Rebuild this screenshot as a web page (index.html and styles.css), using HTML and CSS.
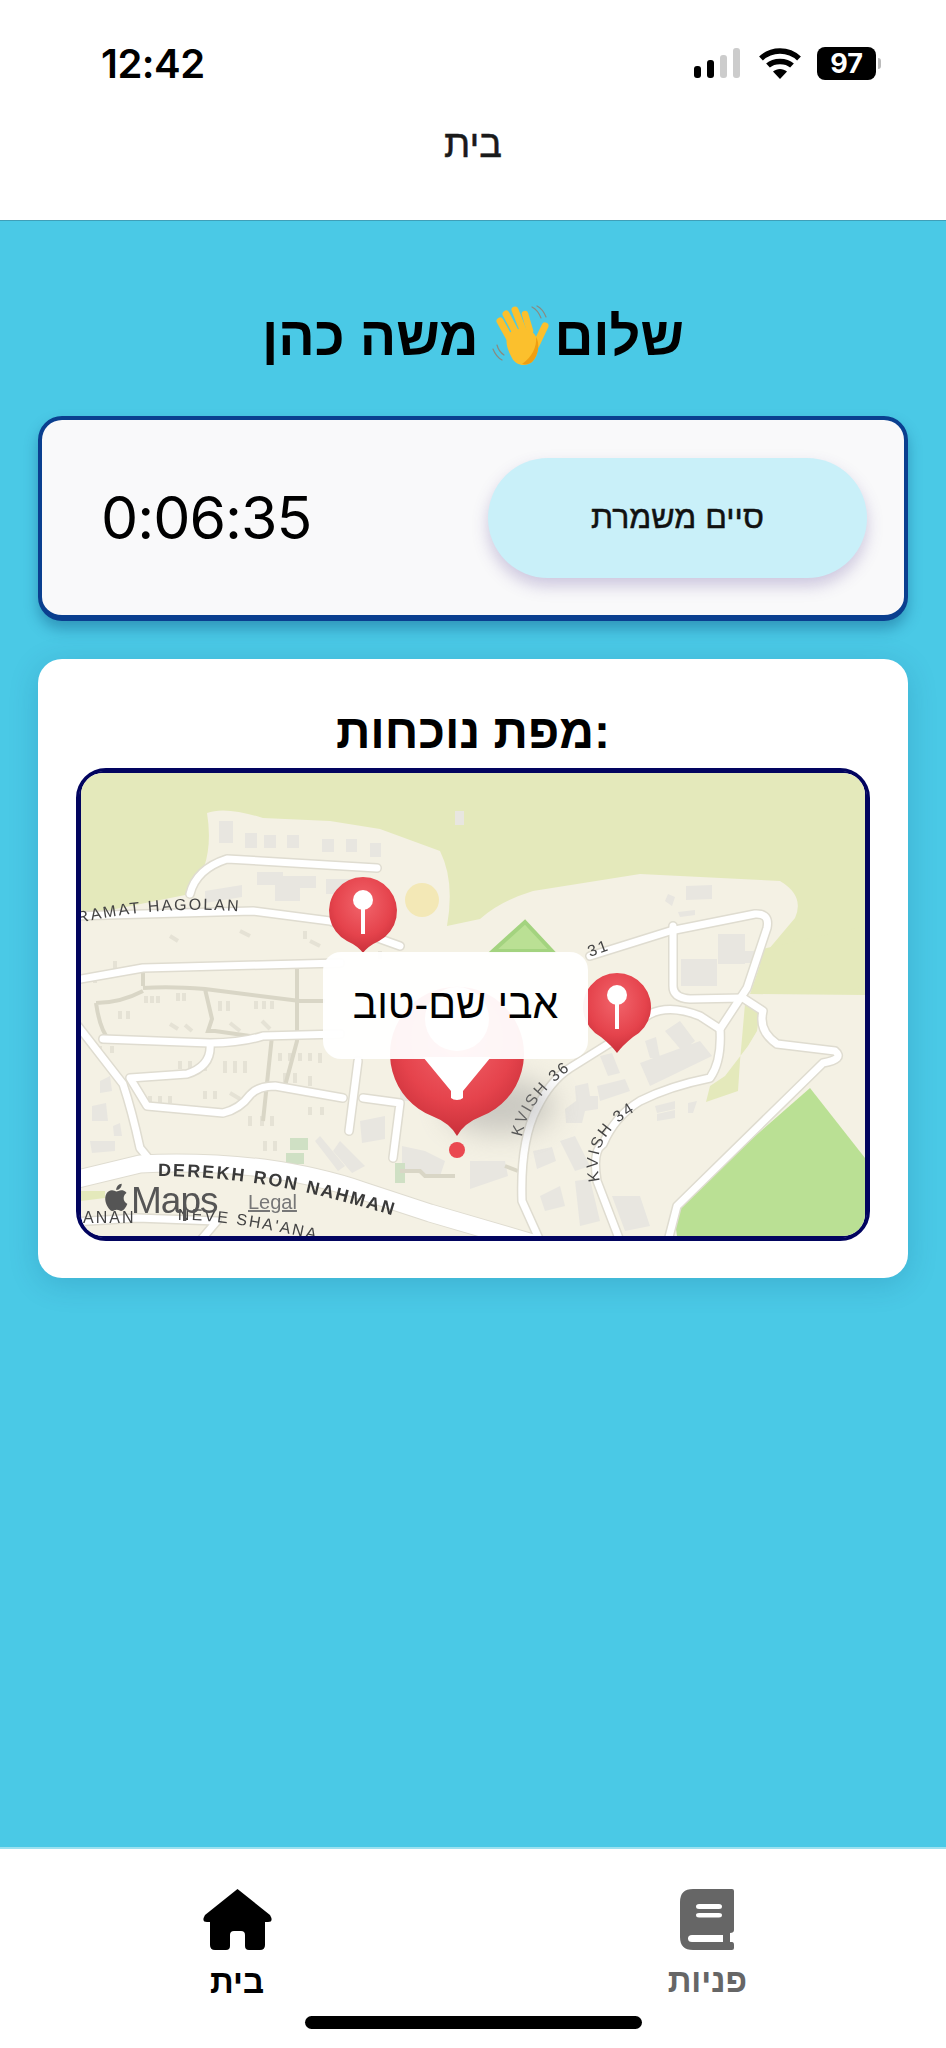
FILE: index.html
```html
<!DOCTYPE html>
<html lang="he">
<head>
  <meta charset="UTF-8">
  <meta name="viewport" content="width=device-width, initial-scale=1.0">
  <title>בית</title>
  <link rel="stylesheet" href="styles.css">
</head>
<body>
  <div class="app">

    <!-- Status bar and page title -->
    <header class="top">
      <div class="status">
        <span class="clock">12:42</span>
        <div class="status-icons">
          <div class="signal">
            <i class="bar b1"></i><i class="bar b2"></i><i class="bar b3 off"></i><i class="bar b4 off"></i>
          </div>
          <svg class="wifi" width="42" height="32" viewBox="0 0 42 32">
            <path d="M2 11.5C12.5 1.5 29.5 1.5 40 11.5" fill="none" stroke="#000" stroke-width="5.5"/>
            <path d="M9 18.5C15 13 27 13 33 18.5" fill="none" stroke="#000" stroke-width="5.5"/>
            <path d="M14 24.5C18 21 24 21 28 24.5L21 32Z" fill="#000"/>
          </svg>
          <div class="battery"><span>97</span></div>
          <i class="battery-cap"></i>
        </div>
      </div>
      <h2 class="page-title">בית</h2>
    </header>

    <main class="content">
      <h1 class="greeting">
        <span>שלום</span>
        <svg class="wave" width="62" height="62" viewBox="0 0 62 62">
          <g fill="none" stroke="#8a8a80" stroke-width="1.2" stroke-linecap="round">
            <path d="M40 2C44 4 47 8 49 13"/>
            <path d="M45 1C49 3 52 7 54 12"/>
            <path d="M1 44C3 49 6 53 10 55"/>
            <path d="M5 40C6 44 9 48 12 50"/>
          </g>
          <g fill="none" stroke="#fbc02d" stroke-linecap="round">
            <path d="M18 34L8 16" stroke-width="7"/>
            <path d="M24 28L14 9" stroke-width="7"/>
            <path d="M31 25L23 5" stroke-width="7"/>
            <path d="M38 26L33 9" stroke-width="6.5"/>
            <path d="M44 40L53 21" stroke-width="7"/>
          </g>
          <path d="M16 30C20 22 38 22 43 30C48 38 47 50 40 57C34 62 24 61 20 53C17 47 12 38 16 30Z" fill="#fbc02d"/>
          <path d="M40 57C47 50 48 38 44 32C45 42 40 52 30 59C34 60 37 59 40 57Z" fill="#ef9f13"/>
        </svg>
        <span>משה כהן</span>
      </h1>

      <section class="shift-card">
        <span class="timer">0:06:35</span>
        <button class="end-shift" type="button">סיים משמרת</button>
      </section>

      <section class="map-card">
        <h2 class="map-title">מפת נוכחות:</h2>
        <div class="map-frame">
          <div class="map-view">
            <svg class="map" width="784" height="463" viewBox="81 772 784 463">
              <defs>
                <radialGradient id="pinRed" cx="50%" cy="35%" r="65%">
                  <stop offset="0" stop-color="#f2656c"/>
                  <stop offset="0.65" stop-color="#e5434c"/>
                  <stop offset="1" stop-color="#c9303a"/>
                </radialGradient>
                <g id="thin">
                  <path d="M190 893Q196 868 227 858L377 867"/>
                  <path d="M70 915L253 910L330 920L400 945"/>
                  <path d="M70 980L143 967L340 962"/>
                  <path d="M103 1038L210 1042Q240 1042 263 1035L340 1033"/>
                  <path d="M210 1043Q212 1065 187 1073L130 1077L147 1105L223 1112Q240 1108 250 1094Q258 1085 275 1085L343 1097"/>
                  <path d="M358 1060L349 1130"/>
                  <path d="M363 1097L400 1102L393 1157"/>
                  <path d="M78 1025L123 1083Q132 1110 140 1147L153 1163"/>
                  <path d="M75 1221L137 1217L217 1220L200 1240"/>
                  <path d="M540 1240L522 1200Q520 1140 537 1107Q550 1080 570 1067L610 1042Q630 1025 650 1013Q670 1003 700 1015L720 1028"/>
                  <path d="M620 1240L597 1180Q592 1150 603 1143Q615 1115 640 1100Q670 1085 710 1077Q722 1060 720 1028L747 987L767 927Q770 912 755 913L670 930L590 955"/>
                  <path d="M673 925V985Q673 997 690 998L743 997L763 1010Q758 1030 777 1043L835 1050Q845 1058 823 1062L677 1205L668 1240"/>
                </g>
                <g id="wide">
                  <path d="M70 1180L140 1163Q200 1160 263 1167Q320 1175 363 1190L430 1212L560 1250"/>
                </g>
                <g id="lanes">
                  <path d="M143 967V985M143 987Q170 985 205 988L300 1000L325 1000M205 988L212 1018L208 1030L215 1030L250 1035M96 1002Q120 1002 143 990M96 1002Q100 1030 110 1040"/>
                  <path d="M297 967V1040L285 1085M272 1035L263 1120"/>
                  <path d="M400 1170L420 1170L425 1175L455 1175M505 1165L518 1170"/>
                </g>
              </defs>

              <rect x="81" y="772" width="784" height="463" fill="#e4e9bb"/>
              <!-- land -->
              <path class="land" d="M207 812Q225 805 263 817L330 820L380 828L440 850Q455 880 447 925L480 918Q500 900 533 890L640 873L780 880Q805 895 795 917L763 955L750 993L865 994V1235H81V915L190 893Q215 860 207 812Z"/>
              <path class="scrub" d="M753 950L865 925V985L840 992L800 985L760 965Z"/>
              <path class="scrub" d="M745 1003L760 1010L757 1030L748 1045L725 1075L710 1085L706 1101L738 1090L740 1060Z"/>
              <path class="park" d="M810 1087L865 1157V1235H677L673 1207Z"/>
              <path class="park park-edge" d="M493 950L525 921L552 950Z"/>
              <path class="scrub" d="M81 1190H105V1197L81 1200Z"/>
              <circle cx="422" cy="899" r="17" fill="#f3e8b6"/>

              <!-- buildings -->
              <g class="bld">
                <rect x="219" y="820" width="14" height="22"/><rect x="245" y="832" width="12" height="15"/><rect x="264" y="834" width="12" height="13"/><rect x="287" y="834" width="12" height="13"/><rect x="322" y="838" width="12" height="13"/><rect x="346" y="838" width="11" height="13"/><rect x="370" y="842" width="11" height="14"/><rect x="455" y="810" width="9" height="14"/>
                <rect x="257" y="871" width="26" height="13"/><path d="M275 875H316V887H300V900H275Z"/><path d="M205 890L242 884V896L205 902Z"/><rect x="326" y="878" width="24" height="15"/>
                <path d="M686 885L712 884V898L686 899ZM668 893L675 896L672 905L665 900ZM678 911L695 909V914L680 916Z"/>
                <rect x="718" y="933" width="27" height="30"/><rect x="681" y="958" width="36" height="27"/><rect x="725" y="950" width="30" height="12"/>
                <path d="M665 1030L680 1020L695 1040L682 1050ZM645 1040L656 1036L660 1057L650 1057ZM600 1055L612 1052L620 1072L608 1075ZM640 1062L700 1040L712 1055L650 1085ZM597 1085L625 1078L630 1090L600 1100ZM575 1085L588 1082L590 1095L598 1095V1108L585 1110L582 1122L566 1122L565 1108L576 1100Z"/>
                <path d="M655 1105L675 1100V1108L657 1112ZM657 1113L675 1109V1117L657 1120ZM688 1102L697 1100L693 1112L688 1112Z"/>
                <path d="M533 1150L552 1146L556 1160L537 1168ZM560 1140L575 1135L590 1165L575 1170ZM470 1160H505L508 1175L470 1188ZM540 1195L560 1185L565 1205L545 1210ZM575 1180L590 1178L600 1220L580 1225ZM612 1195L640 1195L650 1225L625 1230Z"/>
                <path d="M100 1080L110 1075L112 1090L100 1092ZM92 1105L106 1102L108 1120L92 1120ZM113 1125L120 1122L122 1135L114 1135ZM90 1140L115 1140V1150L92 1152Z"/>
                <path d="M360 1120L385 1115V1138L362 1142ZM400 1075L420 1072L425 1100L400 1100ZM402 1145L425 1150L445 1160L440 1175L402 1170Z"/>
                <path d="M320 1135L345 1165L338 1170L315 1140ZM340 1140L365 1165L352 1172L333 1150Z"/>
              </g>
              <g class="teal">
                <rect x="290" y="1137" width="18" height="12"/><rect x="286" y="1152" width="18" height="11"/><rect x="395" y="1162" width="10" height="20"/>
              </g>
              <!-- tiny house dots in the west neighbourhood -->
              <g class="dots">
                <path d="M146 995V1002M152 995V1002M158 995V1002M178 992V1000M184 992V1000M220 1000V1010M228 1000V1010M256 1000V1008M264 1000V1008M272 1000V1008M120 1010V1018M128 1010V1018M170 1023L178 1028M185 1024L192 1030M230 1022L240 1030M262 1020L270 1028M180 1060V1068M190 1060V1068M205 1060V1070M225 1060V1072M235 1060V1072M245 1060V1072M280 1052V1060M290 1052V1060M300 1052V1060M310 1052V1060M320 1052V1062M285 1072V1082M295 1072V1082M310 1075V1085M205 1090V1098M215 1090V1098M230 1092L240 1098M150 1095V1102M160 1095V1102M170 1095V1102M250 1115V1125M262 1115V1125M272 1115V1125M310 1106V1114M322 1106V1114M265 1140V1150M275 1140V1150M100 1045V1052M112 1045V1052M115 960V975M95 975V982M380 950V958M305 930V938M310 940L320 945M240 930L250 935M170 935L178 940"/>
              </g>

              <use href="#lanes" class="lane"/>
              <use href="#thin" class="road-case"/>
              <use href="#wide" class="road-case wide"/>
              <use href="#thin" class="road"/>
              <use href="#wide" class="road wide"/>

              <!-- labels -->
              <path id="lblRamat" d="M78 922Q170 902 256 912" fill="none"/>
              <path id="lblDerekh" d="M158 1175Q225 1175 300 1190Q370 1206 422 1224" fill="none"/>
              <path id="lblNeve" d="M178 1219Q230 1218 330 1242" fill="none"/>
              <path id="lbl36" d="M522 1136Q528 1098 575 1065" fill="none"/>
              <path id="lbl34" d="M600 1180Q588 1135 642 1106" fill="none"/>
              <path id="lbl31" d="M590 956L620 945" fill="none"/>
              <text class="lbl"><textPath href="#lblRamat">RAMAT HAGOLAN</textPath></text>
              <text class="lbl lbl-bold"><textPath href="#lblDerekh">DEREKH RON NAHMAN</textPath></text>
              <text class="lbl"><textPath href="#lblNeve">NEVE SHA'ANA</textPath></text>
              <text class="lbl" x="83" y="1222">ANAN</text>
              <text class="lbl"><textPath href="#lbl36">KVISH 36</textPath></text>
              <text class="lbl"><textPath href="#lbl34">KVISH 34</textPath></text>
              <text class="lbl"><textPath href="#lbl31">31</textPath></text>

              <!-- Maps logo -->
              <path class="maps-mark" transform="translate(100 1180) scale(1.36)" d="M18.71 19.5c-.83 1.24-1.71 2.45-3.05 2.47-1.34.03-1.77-.79-3.29-.79-1.53 0-2 .77-3.27.82-1.31.05-2.3-1.32-3.14-2.53C4.25 17 2.94 12.45 4.7 9.39c.87-1.52 2.43-2.48 4.12-2.51 1.28-.02 2.5.87 3.29.87.78 0 2.26-1.07 3.81-.91.65.03 2.47.26 3.64 1.98-.09.06-2.17 1.28-2.15 3.81.03 3.02 2.65 4.03 2.68 4.04-.03.07-.42 1.44-1.38 2.83M13 3.5c.73-.83 1.94-1.46 2.94-1.5.13 1.17-.34 2.35-1.04 3.19-.69.85-1.83 1.51-2.95 1.42-.15-1.15.41-2.35 1.05-3.11z"/>
              <text class="maps-word" x="131" y="1212">Maps</text>
              <text class="maps-legal" x="248" y="1208">Legal</text>

              <!-- pins -->
              <ellipse class="pin-shadow" cx="500" cy="1105" rx="55" ry="28"/>
              <g class="pin">
                <path d="M363 952Q358 945 347 940A34 34 0 1 1 379 940Q368 945 363 952Z" fill="url(#pinRed)"/>
                <circle cx="363" cy="899" r="10" fill="#fff"/>
                <rect x="361" y="905" width="4" height="28" fill="#fff"/>
              </g>
              <g class="pin">
                <path d="M617 1052Q612 1045 601 1036A34 34 0 1 1 633 1036Q622 1045 617 1052Z" fill="url(#pinRed)"/>
                <circle cx="617" cy="994" r="10" fill="#fff"/>
                <rect x="615" y="1000" width="4" height="28" fill="#fff"/>
              </g>
              <g class="pin">
                <path d="M457 1135Q450 1122 432 1115A67 67 0 1 1 482 1115Q464 1122 457 1135Z" fill="url(#pinRed)"/>
                <circle cx="457" cy="1018" r="32" fill="#fff"/>
                <path d="M423 1056L451 1090V1097Q453 1099 457 1099Q461 1099 463 1097V1090L491 1056Z" fill="#fff"/>
                <circle cx="457" cy="1149" r="8" fill="#ea4850"/>
              </g>
            </svg>
            <div class="callout">אבי שם-טוב</div>
          </div>
        </div>
      </section>
    </main>

    <!-- Bottom tabs -->
    <nav class="tabs">
      <div class="tab">
        <svg width="70" height="62" viewBox="-1 0 70 62">
          <path d="M34.5 0L67 26Q71 33 65 33H62V56Q62 61 57 61H46Q42 61 42 57V46Q42 42 38 42H31Q27 42 27 46V57Q27 61 23 61H12Q7 61 7 56V33H4Q-2 33 2 26Z" fill="#000"/>
        </svg>
        <span>בית</span>
      </div>
      <div class="tab tab-off">
        <svg width="54" height="61" viewBox="0 0 54 61">
          <path fill-rule="evenodd" d="M13 0H52Q54 0 54 2V41Q54 44 50 44V53H52Q54 53 54 56V59Q54 61 52 61H13Q0 61 0 48V13Q0 0 13 0ZM19 15Q16 15 16 17.500Q16 20 19 20H39Q42 20 42 17.500Q42 15 39 15ZM19 24Q16 24 16 26Q16 28.500 19 28.500H39Q42 28.500 42 26Q42 24 39 24ZM12 46Q8 46 8 49.500Q8 53 12 53H43V46Z" fill="#666"/>
        </svg>
        <span>פניות</span>
      </div>
      <i class="home-bar"></i>
    </nav>
  </div>
</body>
</html>
```

FILE: styles.css
```css
* {
  box-sizing: border-box;
}
body {
  margin: 0;
  font-family: "Liberation Sans", Arial, sans-serif;
  background-color: #4ac9e6;
  color: #000;
}
.app {
  display: flex;
  flex-direction: column;
  width: 946px;
  height: 2048px;
  overflow: hidden;
}

/* top */
.top {
  height: 221px;
  flex: none;
  background-color: #fff;
  border-bottom: 1px solid #3f9fb8;
}
.status {
  display: flex;
  justify-content: space-between;
  align-items: center;
  height: 126px;
  padding: 0 65px 0 101px;
}
.clock {
  font-family: Inter, sans-serif;
  font-size: 40px;
  font-weight: 600;
  letter-spacing: -0.5px;
}
.status-icons {
  display: flex;
  align-items: center;
}
.signal {
  display: flex;
  align-items: flex-end;
  gap: 6px;
  height: 30px;
  margin-right: 19px;
}
.bar {
  display: block;
  width: 7px;
  border-radius: 3px;
  background-color: #000;
}
.bar.off {
  background-color: #ccc;
}
.b1 { height: 12px; }
.b2 { height: 18px; }
.b3 { height: 23px; }
.b4 { height: 30px; }
.wifi {
  margin-right: 16px;
}
.battery {
  display: flex;
  align-items: center;
  justify-content: center;
  width: 59px;
  height: 33px;
  border-radius: 8px;
  background-color: #000;
  color: #fff;
  font-family: Inter, sans-serif;
  font-size: 27px;
  font-weight: 700;
}
.battery-cap {
  display: block;
  width: 3px;
  height: 11px;
  margin-left: 2px;
  border-radius: 0 3px 3px 0;
  background-color: #bbb;
}
.page-title {
  margin: -4px 0 0;
  text-align: center;
  font-size: 38px;
  font-weight: 400;
  line-height: 44px;
  color: #1a1a1a;
  -webkit-text-stroke: 0.5px #1a1a1a;
}

/* content */
.content {
  flex: 1;
  padding: 0 38px;
}
.greeting {
  display: flex;
  direction: rtl;
  justify-content: center;
  align-items: center;
  gap: 0;
  height: 62px;
  margin: 84px 0 0;
  font-size: 54px;
  font-weight: 700;
  line-height: 62px;
}
.greeting span:last-child {
  margin-right: 14px;
}
.shift-card {
  display: flex;
  justify-content: space-between;
  align-items: center;
  height: 205px;
  margin: 49px 0 0;
  padding: 0 37px 0 59px;
  border: 4px solid #0a3f8f;
  border-bottom-width: 6px;
  border-radius: 24px;
  background-color: #f9f9fa;
  box-shadow: 0 8px 14px rgba(0, 60, 110, 0.35);
}
.timer {
  font-family: Inter, sans-serif;
  font-size: 59px;
  font-weight: 400;
  letter-spacing: -1px;
}
.end-shift {
  width: 379px;
  height: 120px;
  padding: 0;
  border: 0;
  border-radius: 60px;
  background-color: #c9f0f9;
  font-family: "Liberation Sans", Arial, sans-serif;
  font-size: 32px;
  font-weight: 400;
  color: #111;
  -webkit-text-stroke: 0.5px #111;
  box-shadow: 0 8px 16px rgba(90, 70, 150, 0.28);
}
.map-card {
  height: 619px;
  margin-top: 38px;
  padding: 48px 38px 0;
  border-radius: 24px;
  background-color: #fff;
  box-shadow: 0 6px 30px rgba(0, 60, 110, 0.18);
}
.map-title {
  margin: 0 0 12px;
  height: 49px;
  text-align: center;
  font-size: 48px;
  font-weight: 700;
  line-height: 49px;
}
.map-frame {
  width: 794px;
  height: 473px;
  border: 3px solid #02045f;
  border-radius: 30px;
  background-color: #fff;
}
.map-view {
  position: relative;
  height: 467px;
  border: 2px solid #02045f;
  border-radius: 24px;
  overflow: hidden;
}
.map {
  display: block;
  filter: blur(0.35px);
}
.land { fill: #f4f1e4; }
.scrub { fill: #e4e9bb; }
.park { fill: #bae094; }
.park-edge { stroke: #a3d37f; stroke-width: 4px; }
.bld { fill: #e8e6e0; }
.teal { fill: #cfe0c4; }
.dots {
  fill: none;
  stroke: #e5e2d5;
  stroke-width: 4px;
}
.lane {
  fill: none;
  stroke: #d9d6c6;
  stroke-width: 4px;
}
.road-case, .road {
  fill: none;
  stroke-linecap: round;
  stroke-linejoin: round;
}
.road-case {
  stroke: #dfdcd0;
  stroke-width: 10px;
}
.road {
  stroke: #fff;
  stroke-width: 7px;
}
.road-case.wide { stroke-width: 19px; }
.road.wide { stroke-width: 17px; }
.lbl {
  font-family: "Liberation Sans", Arial, sans-serif;
  font-size: 16px;
  letter-spacing: 2px;
  fill: #444;
}
.lbl-bold {
  font-size: 18px;
  font-weight: 700;
  fill: #3a3a3a;
}
.maps-mark { fill: #555; }
.maps-word {
  font-family: "Liberation Sans", Arial, sans-serif;
  font-size: 37px;
  fill: #555;
  letter-spacing: -1px;
}
.maps-legal {
  font-family: "Liberation Sans", Arial, sans-serif;
  font-size: 20px;
  fill: #777;
  text-decoration: underline;
}
.pin-shadow {
  fill: #999;
  opacity: 0.45;
  filter: blur(14px);
}
.callout {
  position: absolute;
  left: 242px;
  top: 179px;
  width: 265px;
  height: 107px;
  padding-top: 30px;
  border-radius: 18px;
  background-color: rgba(255, 255, 255, 0.95);
  text-align: center;
  direction: rtl;
  font-size: 41px;
  line-height: 44px;
}

/* tabs */
.tabs {
  position: relative;
  display: flex;
  flex: none;
  justify-content: space-between;
  height: 201px;
  padding: 40px 199px 0 202px;
  background-color: #fff;
  border-top: 2px solid #9be1f0;
}
.tab {
  display: flex;
  flex-direction: column;
  align-items: center;
  gap: 18px;
  font-size: 33px;
  font-weight: 700;
  line-height: 26px;
}
.tab-off {
  color: #666;
}
.home-bar {
  position: absolute;
  left: 305px;
  bottom: 19px;
  width: 337px;
  height: 13px;
  border-radius: 7px;
  background-color: #000;
}
```
